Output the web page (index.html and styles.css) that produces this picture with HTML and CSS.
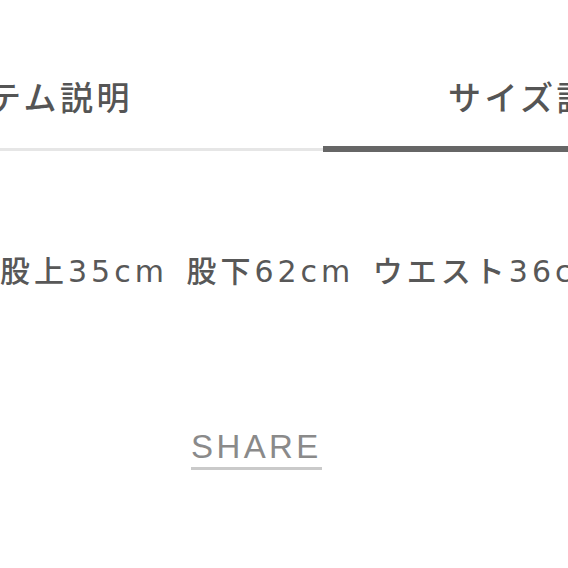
FILE: index.html
```html
<!DOCTYPE html>
<html lang="ja">
<head>
<meta charset="utf-8">
<title>サイズ説明</title>
<link rel="stylesheet" href="styles.css">
</head>
<body>
<div class="page">
  <nav class="tabs">
    <div class="tab tab-left">アイテム説明</div>
    <div class="tab tab-right">サイズ説明</div>
  </nav>
  <div class="content">股上35cm 股下62cm ウエスト36cm 裾幅20cm</div>
  <div class="share-row"><a class="share" href="#">SHARE</a></div>
</div>
</body>
</html>
```

FILE: styles.css
```css
html, body {
  margin: 0;
  padding: 0;
  background: #ffffff;
  overflow: hidden;
}

.page {
  width: 568px;
  height: 568px;
  overflow: hidden;
}

.tabs {
  display: flex;
  align-items: flex-start;
  width: 1000px;
  margin-left: -200px;
}

.tab {
  box-sizing: border-box;
  font-family: "Noto Sans CJK JP", sans-serif;
  font-size: 33px;
  font-weight: 500;
  line-height: 40px;
  letter-spacing: 3.5px;
  color: #555555;
  padding-top: 76px;
  white-space: nowrap;
}

.tab-left {
  width: 523px;
  height: 151px;
  text-align: right;
  padding-right: 190px;
  border-bottom: 3px solid #e6e6e6;
}

.tab-right {
  flex: 1;
  height: 152px;
  padding-left: 125px;
  border-bottom: 6px solid #666666;
}

.content {
  margin-top: 100px;
  font-family: "DejaVu Sans", "Noto Sans CJK JP", sans-serif;
  font-size: 30px;
  font-weight: 500;
  line-height: 40px;
  letter-spacing: 4px;
  word-spacing: 5px;
  color: #585858;
  white-space: nowrap;
}

.share-row {
  margin-top: 135px;
  padding-left: 191px;
}

.share {
  display: inline-block;
  font-family: "Liberation Sans", Arial, sans-serif;
  font-size: 33px;
  line-height: 40px;
  letter-spacing: 3.4px;
  color: #8a8a8a;
  text-decoration: none;
  border-bottom: 3px solid #cacaca;
}
```
